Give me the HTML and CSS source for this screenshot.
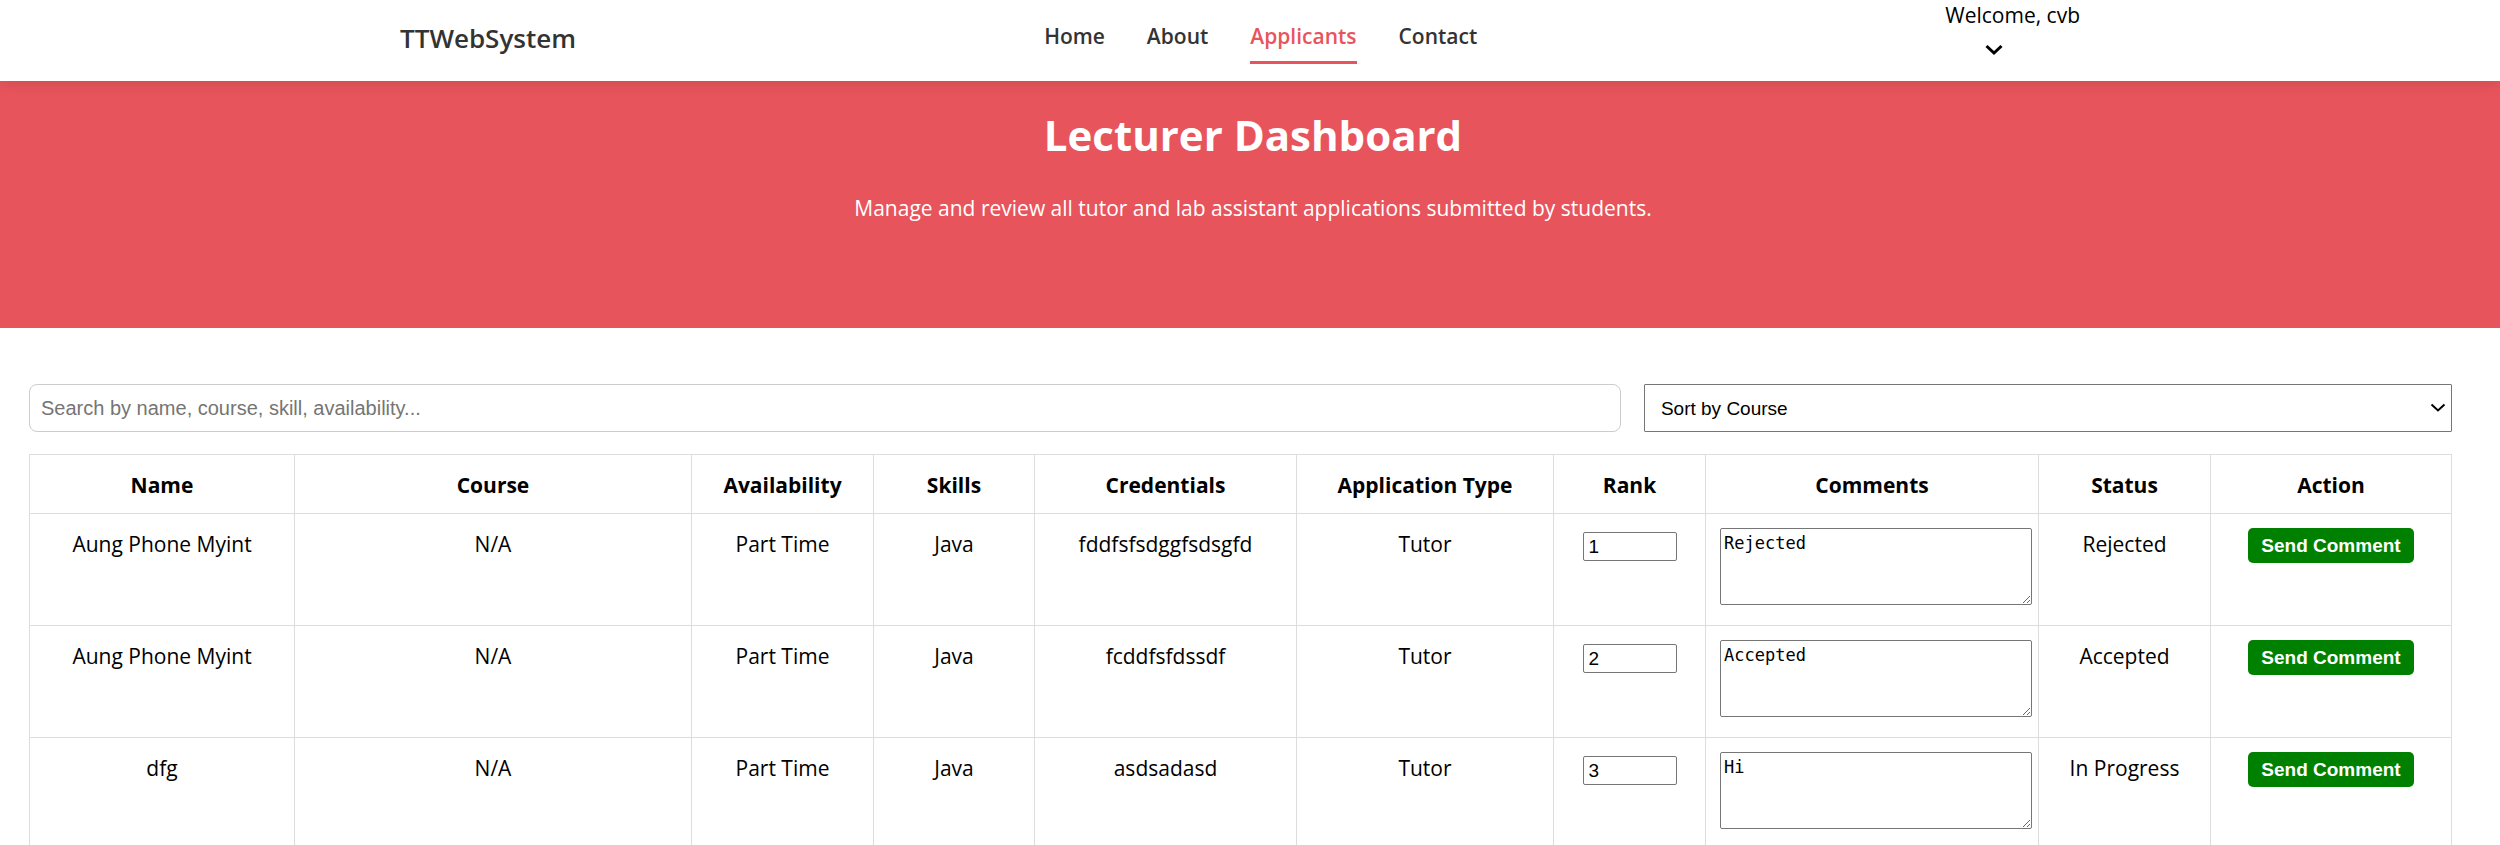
FILE: index.html
```html
<!DOCTYPE html>
<html lang="en">
<head>
<meta charset="utf-8">
<title>TTWebSystem</title>
<link rel="stylesheet" href="styles.css">
</head>
<body>
<header class="navbar">
  <a class="brand" href="#">TTWebSystem</a>
  <nav class="links">
    <a class="link" href="#">Home</a>
    <a class="link" href="#">About</a>
    <a class="link active" href="#">Applicants</a>
    <a class="link" href="#">Contact</a>
  </nav>
  <div class="account">
    <span>Welcome, cvb</span>
    <button class="account-toggle" type="button" aria-label="Account menu">
      <svg width="18" height="12" viewBox="0 0 18 12" fill="none" stroke="#000" stroke-width="3"><path d="M1.5 2 9 9 16.5 2"/></svg>
    </button>
  </div>
</header>
<section class="hero">
  <h1 class="hero-title">Lecturer Dashboard</h1>
  <p class="hero-text">Manage and review all tutor and lab assistant applications submitted by students.</p>
</section>
<main class="content">
  <div class="filters">
    <input class="search" type="text" aria-label="Search" placeholder="Search by name, course, skill, availability...">
    <div class="sort-wrap">
      <select class="sort" aria-label="Sort"><option>Sort by Course</option></select>
      <svg class="sort-arrow" width="16" height="10" viewBox="0 0 16 10" fill="none" stroke="#000" stroke-width="2"><path d="M1.5 1.5 8 7.5 14.5 1.5"/></svg>
    </div>
  </div>
  <table class="applicants">
    <colgroup><col class="c-name"><col class="c-course"><col class="c-avail"><col class="c-skills"><col class="c-cred"><col class="c-type"><col class="c-rank"><col class="c-comments"><col class="c-status"><col class="c-action"></colgroup>
    <thead>
      <tr><th>Name</th><th>Course</th><th>Availability</th><th>Skills</th><th>Credentials</th><th>Application Type</th><th>Rank</th><th>Comments</th><th>Status</th><th>Action</th></tr>
    </thead>
    <tbody>
      <tr><td>Aung Phone Myint</td><td>N/A</td><td>Part Time</td><td>Java</td><td>fddfsfsdggfsdsgfd</td><td>Tutor</td><td><input class="rank" type="text" aria-label="Rank" value="1"></td><td><textarea class="comment" aria-label="Comment">Rejected</textarea></td><td>Rejected</td><td><button class="send" type="button">Send Comment</button></td></tr>
      <tr><td>Aung Phone Myint</td><td>N/A</td><td>Part Time</td><td>Java</td><td>fcddfsfdssdf</td><td>Tutor</td><td><input class="rank" type="text" aria-label="Rank" value="2"></td><td><textarea class="comment" aria-label="Comment">Accepted</textarea></td><td>Accepted</td><td><button class="send" type="button">Send Comment</button></td></tr>
      <tr><td>dfg</td><td>N/A</td><td>Part Time</td><td>Java</td><td>asdsadasd</td><td>Tutor</td><td><input class="rank" type="text" aria-label="Rank" value="3"></td><td><textarea class="comment" aria-label="Comment">Hi</textarea></td><td>In Progress</td><td><button class="send" type="button">Send Comment</button></td></tr>
    </tbody>
  </table>
</main>
</body>
</html>
```

FILE: styles.css
```css
* { box-sizing: border-box; }
html { overflow: hidden; }
body {
  margin: 0;
  background: #fff;
  color: #000;
  font-family: "Open Sans", "Noto Sans", sans-serif;
  font-size: 21px;
  line-height: 30px;
}
.navbar {
  position: relative;
  display: flex;
  justify-content: space-between;
  padding: 0 420px 0 400px;
  height: 81px;
  background: #fff;
  box-shadow: 0 3px 14px rgba(0, 0, 0, 0.1);
}
.brand {
  align-self: center;
  padding-bottom: 6px;
  color: #333;
  font-size: 26px;
  font-weight: 600;
  text-decoration: none;
}
.links { display: flex; gap: 42px; padding-top: 21px; }
.link {
  height: 43px;
  color: #333;
  font-weight: 600;
  text-decoration: none;
}
.active { color: #e8545c; border-bottom: 3px solid #e8545c; }
.account { display: flex; flex-direction: column; align-items: flex-start; }
.account-toggle {
  display: flex;
  margin: 14px 0 0 40px;
  padding: 0;
  border: 0;
  background: none;
}
.hero {
  height: 247px;
  padding: 22px 0 0 6px;
  background: #e8545c;
  color: #fff;
  text-align: center;
}
.hero-title { margin: 0 0 26px; font-size: 42px; line-height: 64px; font-weight: 700; }
.hero-text { margin: 0; }
.content { padding: 56px 48px 0 29px; }
.filters { display: grid; grid-template-columns: 197fr 100fr; gap: 23px; margin-bottom: 22px; }
.search, .sort {
  width: 100%;
  height: 48px;
  font-family: "Liberation Sans", Arial, sans-serif;
  font-size: 19px;
}
.search { padding: 0 11px; border: 1px solid #ccc; border-radius: 8px; font-size: 20px; }
.search::placeholder { color: #757575; }
.sort-wrap { position: relative; }
.sort {
  padding: 0 16px;
  appearance: none;
  border: 1px solid #767676;
  border-radius: 1px;
  background: #fff;
  color: #000;
}
.sort-arrow { position: absolute; right: 6px; top: 19px; pointer-events: none; }
.applicants { width: 100%; table-layout: fixed; border-collapse: collapse; text-align: center; line-height: 32px; }
.applicants th, .applicants td { border: 1px solid #ddd; padding: 14px 14px 12px; vertical-align: top; white-space: nowrap; }
.applicants th { font-weight: 700; }
.applicants td { height: 112px; }
.applicants td:has(.comment) { text-align: left; }
.c-name { width: 265px; }
.c-course { width: 397px; }
.c-avail { width: 182px; }
.c-skills { width: 161px; }
.c-cred { width: 262px; }
.c-type { width: 257px; }
.c-rank { width: 152px; }
.c-comments { width: 333px; }
.c-status { width: 172px; }
.c-action { width: 241px; }
.rank {
  width: 94px;
  height: 29px;
  margin-top: 4px;
  padding: 0 5px;
  border: 1px solid #767676;
  border-radius: 2px;
  font-family: "Liberation Sans", Arial, sans-serif;
  font-size: 19px;
  vertical-align: top;
}
.comment {
  width: 312px;
  height: 77px;
  padding: 3px;
  border: 1px solid #767676;
  border-radius: 2px;
  font-family: "DejaVu Sans Mono", monospace;
  font-size: 17px;
  line-height: 22px;
  vertical-align: top;
}
.send {
  height: 35px;
  padding: 0 13px;
  border: 0;
  border-radius: 5px;
  background: green;
  color: #fff;
  font-family: "Liberation Sans", Arial, sans-serif;
  font-size: 19px;
  font-weight: 700;
  vertical-align: top;
}
```
